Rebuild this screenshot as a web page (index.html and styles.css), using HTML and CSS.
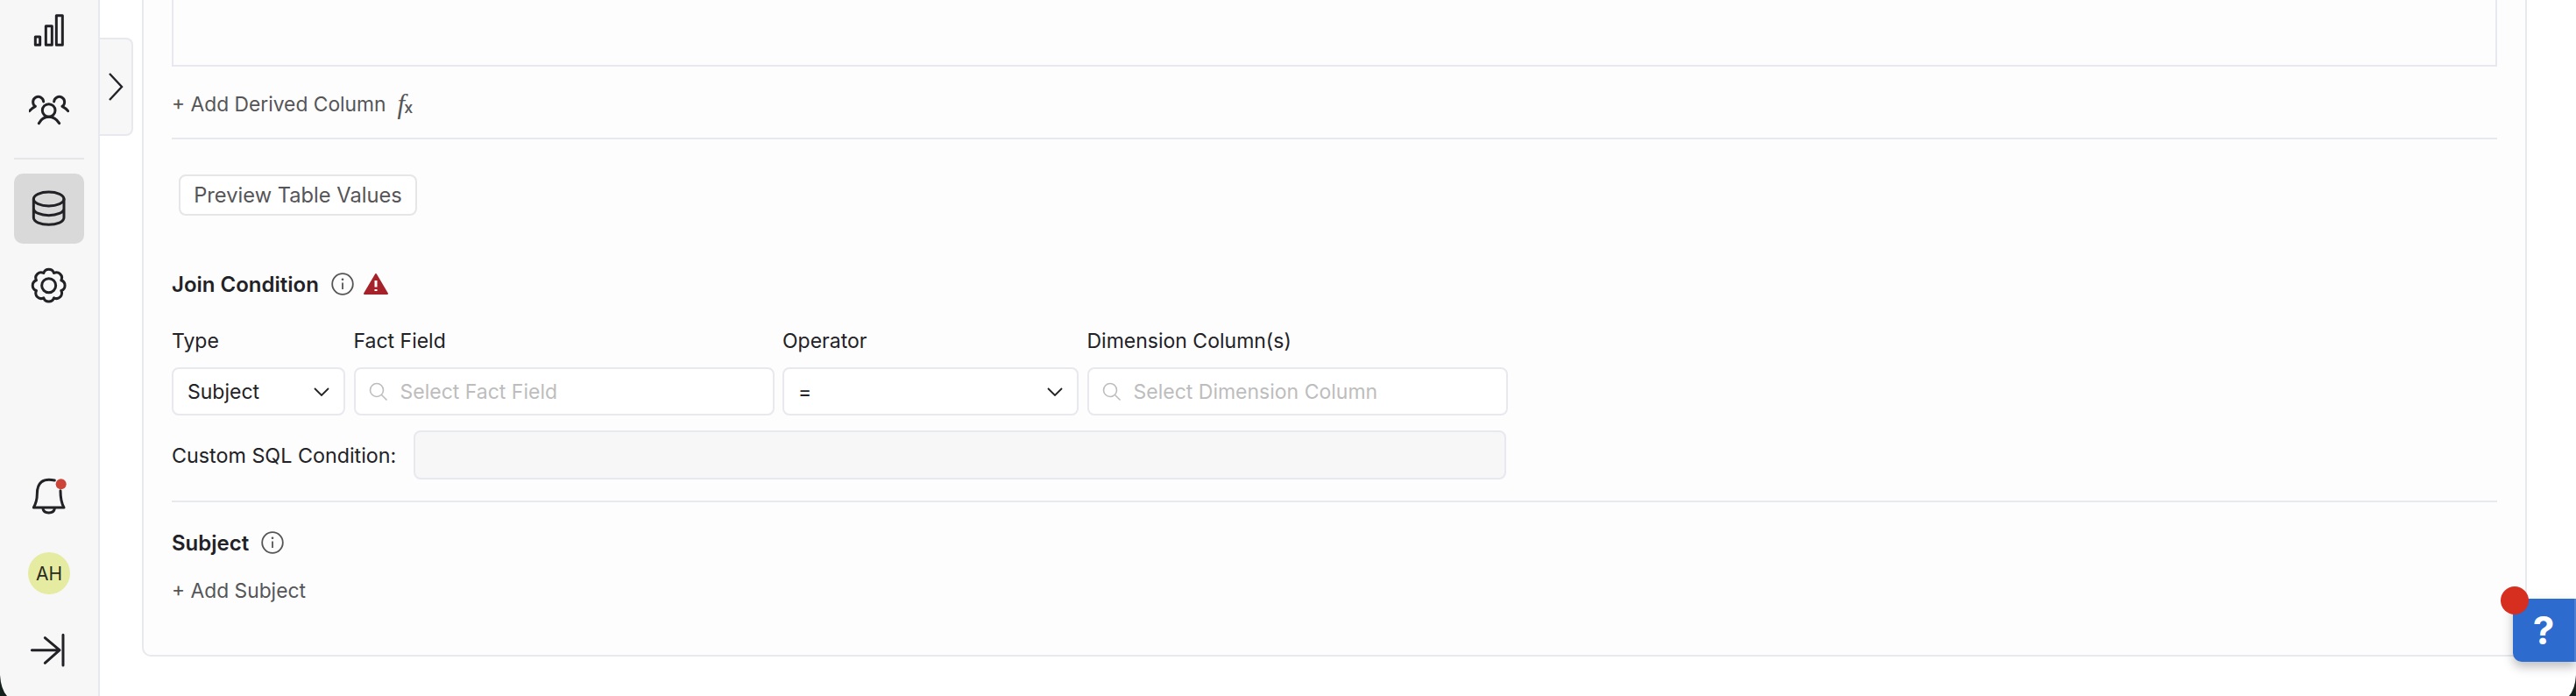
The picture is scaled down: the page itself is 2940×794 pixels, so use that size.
FILE: index.html
```html
<!DOCTYPE html>
<html lang="en">
<head>
  <meta charset="UTF-8">
  <title>Join Condition</title>
  <link rel="stylesheet" href="styles.css">
</head>
<body>
  <div class="app">
    <!-- Sidebar -->
    <aside class="sidebar">
      <div class="nav-group nav-top">
        <a class="nav-item">
          <svg class="icon" viewBox="100 40 136 136"><path d="M122 130h16v28h-16zM158 93h21v65h-21zM194 57h21v101h-21z" stroke-linejoin="round"/></svg>
        </a>
        <a class="nav-item">
          <svg class="icon" viewBox="100 308 136 136"><path d="M150 350A18 18 0 1 0 122 366Q110 372 102 382M186 350A18 18 0 1 1 214 366Q226 372 234 382M134 424Q146 402 168 402Q190 402 204 424"/><circle cx="168" cy="380" r="22"/></svg>
        </a>
      </div>
      <hr class="nav-sep">
      <div class="nav-group">
        <a class="nav-item active">
          <svg class="icon" viewBox="100 646 136 136"><ellipse cx="168" cy="682" rx="52" ry="24"/><path d="M116 682V746C116 760 140 770 168 770C196 770 220 760 220 746V682M116 714C116 728 140 738 168 738C196 738 220 728 220 714"/></svg>
        </a>
        <a class="nav-item">
          <svg class="icon" viewBox="-68 -68 136 136"><path d="M-17.6 -42.5A18.5 18.5 0 0 1 17.6 -42.5A18.5 18.5 0 0 1 42.5 -17.6A18.5 18.5 0 0 1 42.5 17.6A18.5 18.5 0 0 1 17.6 42.5A18.5 18.5 0 0 1 -17.6 42.5A18.5 18.5 0 0 1 -42.5 17.6A18.5 18.5 0 0 1 -42.5 -17.6A18.5 18.5 0 0 1 -17.6 -42.5Z"/><circle r="24"/></svg>
        </a>
      </div>
      <div class="nav-group nav-bottom">
        <a class="nav-item">
          <svg class="icon" viewBox="100 128 136 136"><path d="M188 143Q128 130 128 190Q128 215 116 236H220Q208 215 208 178M148 240Q150 254 168 254Q186 254 188 240"/><circle class="bell-dot" cx="210" cy="156" r="18"/></svg>
        </a>
        <a class="nav-item"><span class="avatar">AH</span></a>
        <a class="nav-item">
          <svg class="icon" viewBox="100 658 136 136"><path d="M110 726H205M155 684L205 726L155 770M217 674V778"/></svg>
        </a>
      </div>
    </aside>

    <button class="collapse-tab">
      <svg class="icon-chevron" viewBox="0 0 20 34"><path d="M3 2L17 17L3 32"/></svg>
    </button>

    <main class="content">
      <section class="card">
        <div class="derived-box"></div>
        <div class="link-row">
          <span class="add-link">+ Add Derived Column</span>
          <span class="fx"><i>f</i><b>x</b></span>
        </div>
        <hr class="rule rule-derived">

        <button class="preview-btn">Preview Table Values</button>

        <!-- Join condition -->
        <div class="section-head head-join">
          <h2>Join Condition</h2>
          <svg class="icon-info" viewBox="0 0 26 26"><circle cx="13" cy="13" r="11.8"/><path d="M13 11.5V19"/><circle class="info-dot" cx="13" cy="7.8" r="1.3"/></svg>
          <svg class="icon-warn" viewBox="0 0 28 24"><path class="warn-fill" d="M14 1L27 23H1Z"/><path class="warn-mark" d="M14 8V15.5M14 18V20"/></svg>
        </div>

        <div class="join-grid">
          <label>Type</label>
          <label>Fact Field</label>
          <label>Operator</label>
          <label>Dimension Column(s)</label>

          <div class="field select-field">
            <span>Subject</span>
            <svg class="icon-caret" viewBox="0 0 18 10"><path d="M1 1L9 9L17 1"/></svg>
          </div>
          <div class="field search-field">
            <svg class="icon-search" viewBox="0 0 22 22"><circle cx="9" cy="9" r="7.5"/><path d="M14.5 14.5L20.5 20.5"/></svg>
            <input type="text" placeholder="Select Fact Field">
          </div>
          <div class="field select-field">
            <span>=</span>
            <svg class="icon-caret" viewBox="0 0 18 10"><path d="M1 1L9 9L17 1"/></svg>
          </div>
          <div class="field search-field">
            <svg class="icon-search" viewBox="0 0 22 22"><circle cx="9" cy="9" r="7.5"/><path d="M14.5 14.5L20.5 20.5"/></svg>
            <input type="text" placeholder="Select Dimension Column">
          </div>
        </div>

        <div class="custom-row">
          <label>Custom SQL Condition:</label>
          <input class="custom-input" type="text" disabled>
        </div>

        <hr class="rule rule-custom">

        <!-- Subject -->
        <div class="section-head head-subject">
          <h2>Subject</h2>
          <svg class="icon-info" viewBox="0 0 26 26"><circle cx="13" cy="13" r="11.8"/><path d="M13 11.5V19"/><circle class="info-dot" cx="13" cy="7.8" r="1.3"/></svg>
        </div>
        <div class="link-row row-subject">
          <span class="add-link">+ Add Subject</span>
        </div>
      </section>
    </main>
  </div>

  <button class="help-btn">?</button>
  <span class="help-dot"></span>

  <svg class="corner corner-left" viewBox="0 0 10 24"><path d="M0 0Q1 16 8 24H0Z"/></svg>
  <svg class="corner corner-right" viewBox="0 0 10 24"><path d="M10 0Q9 16 2 24H10Z"/></svg>
</body>
</html>
```

FILE: styles.css
```css
:root {
  --text: #222226;
  --muted: #555558;
  --line: #e8e8ef;
  --side: #f7f7f8;
  --placeholder: #bdbdbd;
}
* { margin: 0; padding: 0; box-sizing: border-box; }
body {
  background: #fff;
  color: var(--text);
  font-family: Inter, 'Open Sans', sans-serif;
  font-size: 23px;
  height: 794px;
  overflow: hidden;
  position: relative;
}
.app { display: flex; height: 794px; }

/* Sidebar */
.sidebar {
  width: 114px;
  flex-shrink: 0;
  background: var(--side);
  border-right: 2px solid var(--line);
  padding: 0 16px 12px;
  display: flex;
  flex-direction: column;
}
.nav-group { display: flex; flex-direction: column; gap: 8px; }
.nav-top { gap: 10px; margin-top: -5px; }
.nav-bottom { margin-top: auto; }
.nav-item {
  width: 80px;
  height: 80px;
  border-radius: 10px;
  display: flex;
  align-items: center;
  justify-content: center;
}
.nav-item.active { background: #d9d9d9; }
.nav-sep { border: none; height: 2px; background: #e6e6ea; margin: 15px 0 16px; }
.icon {
  width: 45.33px;
  height: 45.33px;
  fill: none;
  stroke: #222226;
  stroke-width: 9;
  stroke-linecap: round;
  stroke-linejoin: round;
}
.icon .bell-dot { fill: #cc4438; stroke: none; }
.avatar {
  width: 48px;
  height: 48px;
  border-radius: 50%;
  background: #e5eba0;
  display: flex;
  align-items: center;
  justify-content: center;
  font-size: 21px;
  color: #2a2a20;
}

/* Collapse tab */
.collapse-tab {
  position: absolute;
  left: 114px;
  top: 43px;
  width: 38px;
  height: 112px;
  background: var(--side);
  border: 2px solid var(--line);
  border-left: none;
  border-radius: 0 8px 8px 0;
  display: flex;
  align-items: center;
  padding-left: 8px;
}
.icon-chevron { width: 20px; height: 34px; fill: none; stroke: #222226; stroke-width: 2.4; }

/* Card */
.content { flex: 1; padding: 0 56px 45px 48px; }
.card {
  height: 749px;
  background: #fdfdfd;
  border: 2px solid var(--line);
  border-top: none;
  border-radius: 0 0 10px 10px;
  padding: 0 32px;
}
.derived-box {
  height: 76px;
  border: 2px solid var(--line);
  border-top: none;
}
.link-row {
  display: flex;
  align-items: center;
  height: 32px;
  margin-top: 26px;
}
.add-link { color: var(--muted); font-size: 22.8px; }
.fx {
  margin-left: 13px;
  color: var(--muted);
  font-family: 'Liberation Serif', serif;
  font-size: 31px;
  line-height: 1;
}
.fx b {
  font-family: Inter, sans-serif;
  font-weight: 500;
  font-size: 18px;
  margin-left: -1px;
}
.rule { border: none; height: 2px; background: var(--line); }
.rule-derived { margin-top: 23px; }
.rule-custom { margin-top: 24px; }
.preview-btn {
  display: block;
  margin: 40px 0 0 8px;
  width: 272px;
  height: 47px;
  background: #fff;
  border: 2px solid #e6e6e8;
  border-radius: 8px;
  color: var(--muted);
  font: inherit;
  font-size: 23.7px;
}
.section-head { display: flex; align-items: center; height: 32px; }
.section-head h2 { font-size: 24px; font-weight: 600; }
.head-join { margin-top: 62px; }
.head-subject { margin-top: 30px; }
.icon-info {
  width: 26px;
  height: 26px;
  margin-left: 14px;
  fill: none;
  stroke: #555;
  stroke-width: 1.8;
}
.icon-info .info-dot { fill: #555; stroke: none; }
.icon-warn { width: 28px; height: 24px; margin-left: 11px; }
.warn-fill { fill: #a6222b; stroke: #a6222b; stroke-width: 2; stroke-linejoin: round; }
.warn-mark { stroke: #fff; stroke-width: 3; fill: none; }
.row-subject { margin-top: 22px; }

/* Join fields */
.join-grid {
  display: grid;
  grid-template-columns: 198px 480px 338px 480px;
  column-gap: 9.5px;
  grid-template-rows: 32px 55px;
  row-gap: 15px;
  margin-top: 32px;
}
.join-grid label { display: flex; align-items: center; padding-top: 2px; }
.field {
  background: #fff;
  border: 2px solid var(--line);
  border-radius: 8px;
  display: flex;
  align-items: center;
}
.select-field { justify-content: space-between; padding: 0 16px 0 16px; }
.icon-caret { width: 18px; height: 10px; fill: none; stroke: #222226; stroke-width: 1.8; }
.search-field { padding-left: 15px; gap: 14px; }
.icon-search { width: 22px; height: 22px; fill: none; stroke: var(--placeholder); stroke-width: 1.6; flex-shrink: 0; }
.search-field input {
  flex: 1;
  min-width: 0;
  border: none;
  outline: none;
  background: transparent;
  font: inherit;
}
.search-field input::placeholder { color: var(--placeholder); opacity: 1; }
.custom-row {
  display: flex;
  align-items: center;
  margin-top: 17px;
  width: 1523px;
}
.custom-row label { font-size: 23.3px; }
.custom-input {
  margin-left: 20px;
  flex: 1;
  height: 56px;
  background: #f7f7f8;
  border: 2px solid var(--line);
  border-radius: 8px;
}

/* Help button */
.help-btn {
  position: absolute;
  right: 0;
  top: 683px;
  width: 72px;
  height: 72px;
  background: #2d6bcf;
  border: none;
  border-right: 2px solid #4a7fd4;
  border-radius: 0 0 0 10px;
  color: #fff;
  font-family: Inter, sans-serif;
  font-weight: 700;
  font-size: 44px;
  box-shadow: 0 6px 12px rgba(0,0,0,0.25);
}
.help-dot {
  position: absolute;
  left: 2854px;
  top: 669px;
  width: 32px;
  height: 32px;
  border-radius: 50%;
  background: #d62e1f;
}

/* Window corners */
.corner { position: absolute; bottom: 0; width: 10px; height: 24px; fill: #14201c; }
.corner-left { left: 0; }
.corner-right { right: 0; }
```
